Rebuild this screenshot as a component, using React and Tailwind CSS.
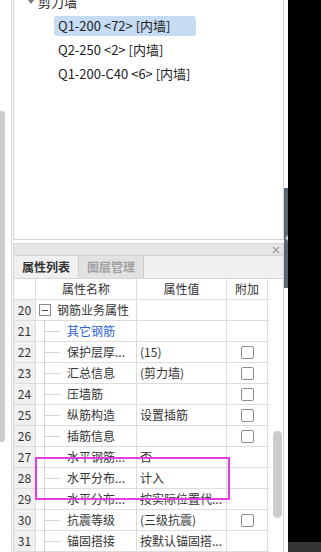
import React from "react";

const rows = [
  { no: 20, name: "钢筋业务属性", group: true },
  { no: 21, name: "其它钢筋", link: true },
  { no: 22, name: "保护层厚...", value: "(15)", check: true },
  { no: 23, name: "汇总信息", value: "(剪力墙)", check: true },
  { no: 24, name: "压墙筋", check: true },
  { no: 25, name: "纵筋构造", value: "设置插筋", check: true },
  { no: 26, name: "插筋信息", check: true },
  { no: 27, name: "水平钢筋...", value: "否" },
  { no: 28, name: "水平分布...", value: "计入" },
  { no: 29, name: "水平分布...", value: "按实际位置代..." },
  { no: 30, name: "抗震等级", value: "(三级抗震)", check: true },
  { no: 31, name: "锚固搭接", value: "按默认锚固搭..." },
];

const walls = [
  { label: "Q1-200 <72> [内墙]", active: true },
  { label: "Q2-250 <2> [内墙]" },
  { label: "Q1-200-C40 <6> [内墙]" },
];

function PropRow({ row }) {
  return (
    <div className="flex h-[21px] border-b border-[#dcdcdc]">
      <div className="w-[22px] border-r border-[#dcdcdc] bg-[#f0f0f0] flex items-center justify-center text-[12px] text-[#333]">
        {row.no}
      </div>
      <div className="w-[101px] border-r border-[#dcdcdc] relative flex items-center text-[12px]">
        {row.group ? (
          <>
            <div className="ml-[3px] w-[12px] h-[12px] border border-[#8a8a8a] flex items-center justify-center">
              <div className="w-[6px] h-px bg-[#444]" />
            </div>
            <span className="ml-[6px] text-[#333]">{row.name}</span>
          </>
        ) : (
          <>
            <div className="absolute left-[8px] top-0 bottom-0 w-px bg-[#d6d6d6]" />
            <div className="ml-[8px] w-[16px] h-px bg-[#d6d6d6]" />
            <span className={"ml-[7px] whitespace-nowrap " + (row.link ? "text-[#2d5fd8]" : "text-[#333]")}>
              {row.name}
            </span>
          </>
        )}
      </div>
      <div className="w-[90px] border-r border-[#dcdcdc] flex items-center pl-[3px] text-[12px] text-[#333] whitespace-nowrap overflow-hidden">
        {row.value}
      </div>
      <div className="w-[41px] border-r border-[#dcdcdc] flex items-center justify-center">
        {row.check && <div className="w-[13px] h-[13px] border border-[#8c8c8c] rounded-[2px] bg-white" />}
      </div>
    </div>
  );
}

export default function App() {
  return (
    <div className="w-[321px] h-[552px] bg-white flex overflow-hidden relative font-['Noto_Sans_CJK_SC',sans-serif]">
      {/* left dock scrollbar */}
      <div className="w-[11px] flex flex-col">
        <div className="mt-[111px] h-[331px] w-[5px] bg-[#cdcdcd] rounded-r-[3px]" />
      </div>
      <div className="w-px bg-[#d8d8d8]" />
      <div className="w-px" />

      {/* panels */}
      <div className="w-[271px] flex flex-col">
        <div className="h-[240px] border-l border-r border-b border-[#d4d4d4] overflow-hidden">
          <div className="-mt-[10px] text-[13px] text-[#222]">
            <div className="h-[24px] flex items-center pl-[14px]">
              <svg width="6" height="4" viewBox="0 0 6 4" className="mr-[4px]">
                <path d="M0 0 L6 0 L3 4 Z" fill="#7a7a7a" />
              </svg>
              <span>剪力墙</span>
            </div>
            {walls.map((w) => (
              <div key={w.label} className="h-[24px] flex items-center pl-[40px]">
                <div
                  className={
                    "h-[20px] flex items-center px-[4px] rounded-[3px] whitespace-nowrap " +
                    (w.active ? "w-[142px] bg-[#c6dcf2]" : "")
                  }
                >
                  {w.label}
                </div>
              </div>
            ))}
          </div>
        </div>
        <div className="h-[3px]" />
        <div className="flex-1 border-l border-r border-t border-[#d4d4d4] flex flex-col">
          <div className="h-[12px] bg-[#e6e6e6] border-b border-[#d2d2d2] flex items-center justify-end pr-[3px]">
            <svg width="8" height="8" viewBox="0 0 8 8">
              <path d="M1 1 L7 7 M7 1 L1 7" stroke="#a0a0a0" strokeWidth="1.2" />
            </svg>
          </div>
          <div className="h-[23px] bg-[#f0f0f0] border-b border-[#d6d6d6] flex">
            <div className="w-[65px] border-r border-[#d0d0d0] flex items-center justify-center text-[12px] font-bold text-[#333]">
              属性列表
            </div>
            <div className="w-[65px] border-r border-[#cdcdcd] bg-[#e2e2e2] flex items-center justify-center text-[12px] font-bold text-[#a0a0a0]">
              图层管理
            </div>
          </div>
          <div className="flex flex-1">
            <div className="w-[255px] flex flex-col">
              <div className="flex h-[21px] border-b border-[#dcdcdc] text-[12px] text-[#333]">
                <div className="w-[22px] border-r border-[#dcdcdc]" />
                <div className="w-[101px] border-r border-[#dcdcdc] flex items-center justify-center">属性名称</div>
                <div className="w-[90px] border-r border-[#dcdcdc] flex items-center justify-center">属性值</div>
                <div className="w-[41px] border-r border-[#dcdcdc] flex items-center justify-center">附加</div>
              </div>
              {rows.map((r) => (
                <PropRow key={r.no} row={r} />
              ))}
            </div>
            <div className="flex-1">
              <div className="ml-[4px] mt-[152px] w-[9px] h-[87px] rounded-full bg-[#cdcdcd]" />
            </div>
          </div>
        </div>
      </div>

      {/* splitter */}
      <div className="w-[4px] flex flex-col">
        <div className="mt-[188px] h-[100px] bg-[#5c6670] flex items-center justify-center">
          <svg width="3" height="6" viewBox="0 0 3 6">
            <path d="M3 0 L0 3 L3 6 Z" fill="#c8c8c8" />
          </svg>
        </div>
      </div>
      <div className="flex-1 bg-black flex flex-col justify-end">
        <div className="h-[10px] bg-[#333]" />
      </div>

      {/* annotation */}
      <div className="absolute left-[35px] top-[457px] w-[195px] h-[43px] border-2 border-[#e23de2]" />
    </div>
  );
}
